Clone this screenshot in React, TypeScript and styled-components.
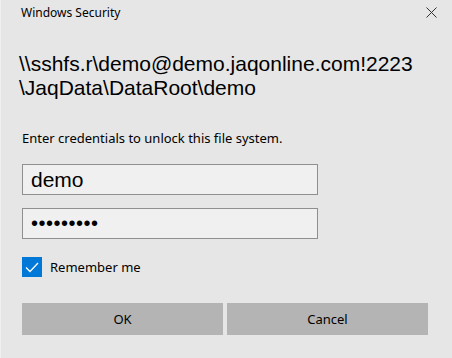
import styled, { createGlobalStyle } from 'styled-components';
import { useState } from 'react';

const GlobalStyle = createGlobalStyle`
  html, body {
    margin: 0;
    padding: 0;
    background: #e6e6e6;
  }
`;

const Dialog = styled.div`
  width: 452px;
  height: 358px;
  box-sizing: border-box;
  background: #e6e6e6;
  border-left: 1px solid #f0f0f0;
  display: flex;
  flex-direction: column;
  font-family: "Noto Sans", "Open Sans", sans-serif;
  color: #000;
`;

const TitleBar = styled.div`
  height: 24px;
  display: flex;
  align-items: center;
  justify-content: space-between;
  padding: 0 15px 0 20px;
`;

const Title = styled.span`
  font-size: 12px;
  color: #000;
`;

const CloseButton = styled.button`
  width: 12px;
  height: 12px;
  padding: 0;
  border: none;
  background: transparent;
  display: flex;
  align-items: center;
  justify-content: center;
`;

const Body = styled.div`
  flex: 1;
  display: flex;
  flex-direction: column;
  padding: 28px 24px 0 21px;
`;

const Resource = styled.div`
  font-family: "Liberation Sans", Arial, sans-serif;
  font-size: 21px;
  line-height: 24px;
  margin-left: -3px;
  word-break: break-all;
`;

const Prompt = styled.p`
  margin: 29px 0 0;
  font-size: 13px;
  line-height: 18px;
`;

const Fields = styled.div`
  display: flex;
  flex-direction: column;
  gap: 13px;
  margin-top: 17px;
`;

const Field = styled.input<{ $secret?: boolean }>`
  width: 296px;
  height: 31px;
  box-sizing: border-box;
  border: 1px solid #8f8f8f;
  background: #f0f0f0;
  padding: 0 8px;
  font-family: "Liberation Sans", Arial, sans-serif;
  font-size: ${(p) => (p.$secret ? '20px' : '21px')};
  letter-spacing: ${(p) => (p.$secret ? '0.5px' : '0')};
  color: #000;
  outline: none;
`;

const CheckRow = styled.label`
  display: flex;
  align-items: center;
  gap: 8px;
  margin-top: 18px;
  font-size: 13px;
  cursor: default;
`;

const CheckBox = styled.span<{ $checked: boolean }>`
  width: 20px;
  height: 20px;
  box-sizing: border-box;
  background: ${(p) => (p.$checked ? '#0078d7' : '#fff')};
  border: ${(p) => (p.$checked ? 'none' : '2px solid #333')};
  display: flex;
  align-items: center;
  justify-content: center;
`;

const Buttons = styled.div`
  display: grid;
  grid-template-columns: 1fr 1fr;
  gap: 4px;
  margin-top: 26px;
`;

const DialogButton = styled.button`
  height: 32px;
  border: none;
  background: #b4b4b4;
  font-family: "Noto Sans", "Open Sans", sans-serif;
  font-size: 13px;
  color: #000;
`;

export default function App() {
  const [remember, setRemember] = useState(true);

  return (
    <>
      <GlobalStyle />
      <Dialog>
        <TitleBar>
          <Title>Windows Security</Title>
          <CloseButton aria-label="Close">
            <svg width="11" height="11" viewBox="0 0 11 11">
              <path d="M0.5 0.5 L10.5 10.5 M10.5 0.5 L0.5 10.5" stroke="#333" strokeWidth="1" />
            </svg>
          </CloseButton>
        </TitleBar>
        <Body>
          <Resource>
            \\sshfs.r\demo@demo.jaqonline.com!2223
            <br />
            \JaqData\DataRoot\demo
          </Resource>
          <Prompt>Enter credentials to unlock this file system.</Prompt>
          <Fields>
            <Field defaultValue="demo" />
            <Field $secret type="password" defaultValue="demodemo1" />
          </Fields>
          <CheckRow onClick={() => setRemember((r) => !r)}>
            <CheckBox $checked={remember}>
              {remember && (
                <svg width="14" height="11" viewBox="0 0 14 11">
                  <path d="M1 5.5 L5 9.5 L13 1" fill="none" stroke="#fff" strokeWidth="1.3" />
                </svg>
              )}
            </CheckBox>
            Remember me
          </CheckRow>
          <Buttons>
            <DialogButton>OK</DialogButton>
            <DialogButton>Cancel</DialogButton>
          </Buttons>
        </Body>
      </Dialog>
    </>
  );
}
